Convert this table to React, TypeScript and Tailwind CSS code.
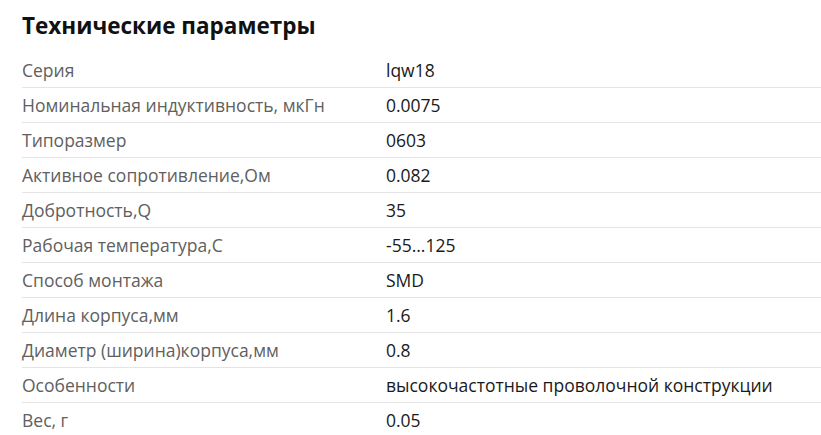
import React from "react";

const rows: [string, string][] = [
  ["Серия", "lqw18"],
  ["Номинальная индуктивность, мкГн", "0.0075"],
  ["Типоразмер", "0603"],
  ["Активное сопротивление,Ом", "0.082"],
  ["Добротность,Q", "35"],
  ["Рабочая температура,С", "-55...125"],
  ["Способ монтажа", "SMD"],
  ["Длина корпуса,мм", "1.6"],
  ["Диаметр (ширина)корпуса,мм", "0.8"],
  ["Особенности", "высокочастотные проволочной конструкции"],
  ["Вес, г", "0.05"],
];

export default function App() {
  return (
    <div
      className="w-[821px] h-[435px] overflow-hidden bg-white pl-[22px] pt-[11px]"
      style={{ fontFamily: '"Open Sans", "Noto Sans", sans-serif' }}
    >
      <h2 className="text-[22.5px] leading-[30px] font-bold text-[#111]">Технические параметры</h2>
      <div className="mt-[12px] flex flex-col">
        {rows.map(([k, v], i) => (
          <div
            key={k}
            className={
              "grid grid-cols-[364px_1fr] h-[35px] items-center text-[17.5px] " +
              (i < rows.length - 1 ? "border-b border-[#e4e4e4]" : "")
            }
          >
            <div className="text-[#606060]">{k}</div>
            <div className="text-[#1a1a1a]">{v}</div>
          </div>
        ))}
      </div>
    </div>
  );
}
